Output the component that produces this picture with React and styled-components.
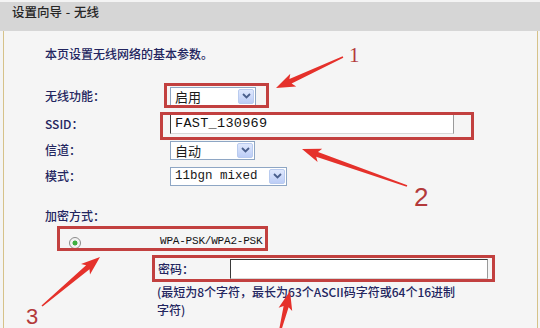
import React from "react";
import styled, { createGlobalStyle } from "styled-components";

const Global = createGlobalStyle`
  html, body { margin: 0; padding: 0; background: #f4f4f4; }
  body { font-family: "Noto Sans CJK SC", "Liberation Sans", sans-serif; }
`;

const CJK = `"Noto Sans CJK SC", "Liberation Sans", sans-serif`;
const MONO = `"Liberation Mono", "DejaVu Sans Mono", "Noto Sans CJK SC", monospace`;

const Page = styled.div`
  position: relative;
  width: 540px;
  height: 328px;
  overflow: hidden;
  background: #f4f4f4;
  padding-top: 2px;
  box-sizing: border-box;
`;

const Header = styled.div`
  height: 29px;
  line-height: 29px;
  background: #d6d6d6;
  padding-left: 12px;
  font: 500 12.5px ${CJK};
  color: #262626;
  word-spacing: 1px;
`;

const Panel = styled.div`
  margin: 0 2px 0 3px;
  height: 297px;
  border-left: 1px solid #d6c289;
  border-right: 1px solid #d6c289;
  background: #f5f5f5;
  padding: 15px 0 0 41px;
  box-sizing: border-box;
`;

const Text = styled.div`
  font: 500 12px/16px ${CJK};
  color: #23255f;
`;

const Intro = styled(Text)`
  margin-bottom: 24px;
`;

const Row = styled.div`
  display: grid;
  grid-template-columns: ${(p) => p.$label || 125}px auto;
  align-items: center;
  height: 20px;
  margin-bottom: ${(p) => p.$gap ?? 6}px;
  margin-left: ${(p) => p.$indent || 0}px;
`;

const Label = styled(Text)``;

const Highlight = styled.div`
  position: relative;
  justify-self: start;
  &::before {
    content: "";
    position: absolute;
    top: ${(p) => p.$t}px;
    right: ${(p) => p.$r}px;
    bottom: ${(p) => p.$b}px;
    left: ${(p) => p.$l}px;
    border: 3px solid #c2403f;
    pointer-events: none;
  }
`;

const SelectBox = styled.div`
  width: ${(p) => p.$w}px;
  height: 19px;
  box-sizing: border-box;
  border: 1px solid #8ea6c4;
  background: #fff;
  display: flex;
  align-items: center;
  justify-content: space-between;
  padding: 0 1px 0 4px;
`;

const SelectText = styled.span`
  font: ${(p) => (p.$mono ? `12.5px ${MONO}` : `13px ${CJK}`)};
  color: #1a1a1a;
  line-height: 17px;
`;

const DropBtn = styled.span`
  width: 16px;
  height: 15px;
  box-sizing: border-box;
  border: 1px solid #b9cbef;
  border-radius: 2px;
  background: linear-gradient(#dfe8fd, #bccdf6);
  display: flex;
  align-items: center;
  justify-content: center;
`;

const TextInput = styled.div`
  width: ${(p) => p.$w}px;
  height: 20px;
  box-sizing: border-box;
  background: #fff;
  border-top: 1px solid #3a3a3a;
  border-left: 1px solid #3a3a3a;
  border-right: 1px solid #9a9a9a;
  border-bottom: 1px solid #d8d8d8;
  padding-left: 4px;
  font: 13.5px/18px ${MONO};
  color: #111;
  letter-spacing: 0.3px;
`;

const EncLabel = styled(Text)`
  margin-top: 22px;
  margin-bottom: 8px;
`;

const WpaRow = styled(Highlight)`
  display: flex;
  width: fit-content;
  align-items: center;
  height: 20px;
  margin-left: 24px;
  gap: 79px;
  margin-bottom: 7px;
`;

const Radio = styled.span`
  width: 12px;
  height: 12px;
  box-sizing: border-box;
  border-radius: 50%;
  border: 1px solid #8b8b8b;
  background: radial-gradient(circle, #3fae3f 0 2.2px, #f2f2f2 2.8px);
  margin-top: 2px;
`;

const WpaText = styled.span`
  font: 11px ${MONO};
  color: #111;
  letter-spacing: -0.2px;
  margin-top: -2px;
`;

const Hint = styled(Text)`
  margin: 4px 0 0 112px;
  line-height: 18px;
`;

const Overlay = styled.svg`
  position: absolute;
  left: 0;
  top: 0;
  pointer-events: none;
`;

function arrowPoints(tx, ty, hx, hy, headLen = 16, headW = 7, tailW = 0.8, neckW = 2.6) {
  const dx = hx - tx;
  const dy = hy - ty;
  const L = Math.hypot(dx, dy);
  const ux = dx / L;
  const uy = dy / L;
  const nx = -uy;
  const ny = ux;
  const bx = hx - ux * headLen;
  const by = hy - uy * headLen;
  const sx = bx - ux * 3;
  const sy = by - uy * 3;
  const pts = [
    [tx + nx * tailW, ty + ny * tailW],
    [bx + nx * neckW, by + ny * neckW],
    [sx + nx * headW, sy + ny * headW],
    [hx, hy],
    [sx - nx * headW, sy - ny * headW],
    [bx - nx * neckW, by - ny * neckW],
    [tx - nx * tailW, ty - ny * tailW],
  ];
  return pts.map((p) => p.map((v) => v.toFixed(1)).join(",")).join(" ");
}

const arrows = [
  [343, 57, 276, 88],
  [407, 186, 302, 149],
  [42, 306, 100, 257],
  [279, 335, 290, 291],
];

function Chevron() {
  return (
    <svg width="9" height="6" viewBox="0 0 9 6">
      <path d="M1 1 L4.5 4.5 L8 1" fill="none" stroke="#4a5f8c" strokeWidth="1.8" />
    </svg>
  );
}

function Select({ w, value, mono }) {
  return (
    <SelectBox $w={w}>
      <SelectText $mono={mono}>{value}</SelectText>
      <DropBtn>
        <Chevron />
      </DropBtn>
    </SelectBox>
  );
}

export default function App() {
  return (
    <>
      <Global />
      <Page>
        <Header>设置向导 - 无线</Header>
        <Panel>
          <Intro>本页设置无线网络的基本参数。</Intro>
          <Row $gap={8}>
            <Label>无线功能：</Label>
            <Highlight $t={-4} $r={-13} $b={-2} $l={-6}>
              <Select w={86} value="启用" />
            </Highlight>
          </Row>
          <Row>
            <Label>SSID：</Label>
            <Highlight $t={-2} $r={-20} $b={-6} $l={-10}>
              <TextInput $w={284}>FAST_130969</TextInput>
            </Highlight>
          </Row>
          <Row>
            <Label>信道：</Label>
            <Select w={85} value="自动" />
          </Row>
          <Row $gap={0}>
            <Label>模式：</Label>
            <Select w={117} value="11bgn mixed" mono />
          </Row>
          <EncLabel>加密方式：</EncLabel>
          <WpaRow $t={-6} $r={-6} $b={1} $l={-12}>
            <Radio />
            <WpaText>WPA-PSK/WPA2-PSK</WpaText>
          </WpaRow>
          <Row $label={72} $indent={113} $gap={0}>
            <Label>密码：</Label>
            <Highlight $t={-4} $r={-7} $b={-3} $l={-78}>
              <TextInput $w={258} />
            </Highlight>
          </Row>
          <Hint>
            (最短为8个字符，最长为63个ASCII码字符或64个16进制
            <br />
            字符)
          </Hint>
        </Panel>
        <Overlay width="540" height="328" viewBox="0 0 540 328">
          {arrows.map((a, i) => (
            <polygon key={i} points={arrowPoints(...a)} fill="#e5312b" />
          ))}
          <text x="349" y="62" fontFamily="Liberation Serif, serif" fontSize="21" fill="#b3393a">1</text>
          <text x="414" y="206" fontFamily="Liberation Sans, sans-serif" fontSize="26" fill="#b3393a">2</text>
          <text x="26" y="324" fontFamily="Liberation Sans, sans-serif" fontSize="22" fill="#b3393a">3</text>
        </Overlay>
      </Page>
    </>
  );
}
